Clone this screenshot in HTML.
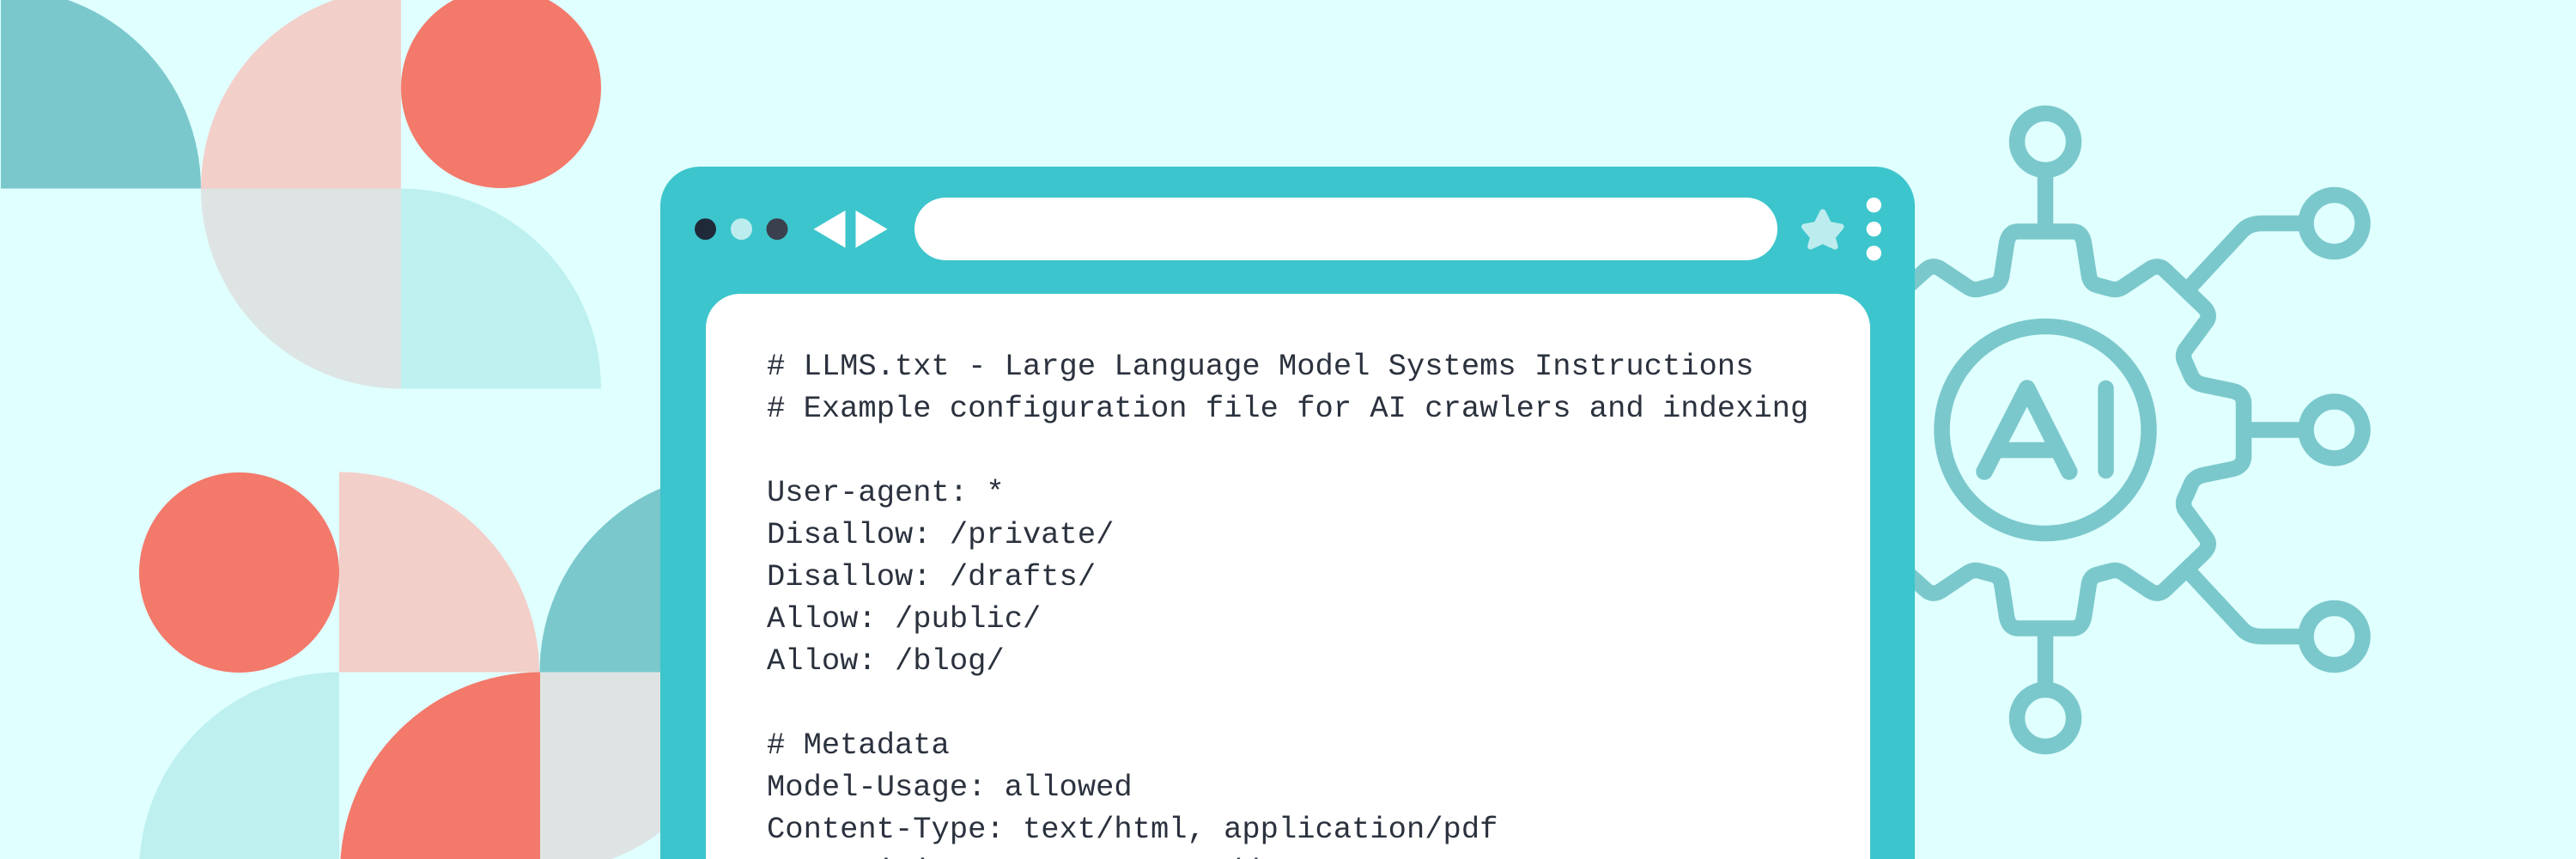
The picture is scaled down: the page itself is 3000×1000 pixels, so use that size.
<!DOCTYPE html>
<html lang="en">
<head>
<meta charset="utf-8">
<title>LLMS.txt</title>
<style>
html,body{margin:0;padding:0;background:#e0ffff;width:3000px;height:1000px;overflow:hidden;}
#page{position:relative;width:3000px;height:1000px;overflow:hidden;}
svg{position:absolute;left:0;top:0;}
pre{position:absolute;left:893px;top:401.5px;margin:0;font-family:"Liberation Mono",monospace;font-size:35.48px;line-height:49px;color:#2b323e;white-space:pre;}
</style>
</head>
<body>
<div id="page">
<svg width="3000" height="1000" viewBox="0 0 3000 1000" xmlns="http://www.w3.org/2000/svg">
  <rect width="3000" height="1000" fill="#e0ffff"/>
  <!-- top-left geometric group -->
  <path d="M1 219.500V-13.500A233 233 0 0 1 234 219.500Z" fill="#7ac8cc"/>
  <path d="M234 219.500A233 233 0 0 1 467 -13.500V219.500Z" fill="#f3cfca"/>
  <circle cx="583.500" cy="102.500" r="116.500" fill="#f3796b"/>
  <path d="M234 219.500H467V452.500A233 233 0 0 1 234 219.500Z" fill="#dee4e4"/>
  <path d="M467 219.500A233 233 0 0 1 700 452.500H467Z" fill="#bef0f0"/>
  <!-- bottom-left geometric group -->
  <circle cx="278.500" cy="666.500" r="116.500" fill="#f3796b"/>
  <path d="M395 549.500A233 233 0 0 1 628 782.500H395Z" fill="#f3cfca"/>
  <path d="M628.500 782.500A233 233 0 0 1 861.500 549.500V782.500Z" fill="#7ac8cc"/>
  <path d="M162 1015.500A233 233 0 0 1 395 782.500V1015.500Z" fill="#bef0f0"/>
  <path d="M396 1015.500A233 233 0 0 1 629 782.500V1015.500Z" fill="#f3796b"/>
  <path d="M629 782.500H862A233 233 0 0 1 629 1015.500Z" fill="#dee4e4"/>

  <!-- AI gear icon -->
  <g fill="none" stroke="#7bc8cc" stroke-width="18.500" stroke-linejoin="round" stroke-linecap="butt">
    <circle cx="2382" cy="165" r="33"/>
    <circle cx="2382" cy="836" r="33"/>
    <circle cx="2718.500" cy="260" r="33"/>
    <circle cx="2718.500" cy="500.500" r="33"/>
    <circle cx="2718.500" cy="741" r="33"/>
    <path d="M2382 200V262M2382 739V801"/>
    <path d="M2613 500.500H2690"/>
    <path d="M2545 340L2612 268Q2620 260 2634 260H2690"/>
    <path d="M2545 661L2612 733Q2620 741 2634 741H2690"/>
    <path d="M2222 333L2242 315Q2250 307 2260 313L2290 333Q2298 339 2307 336L2322 332Q2329 330 2331 322L2337 283Q2339.500 269.500 2350 269.500H2414Q2424.500 269.500 2427 283L2433 322Q2435 330 2442 332L2457 336Q2466 339 2474 333L2504 313Q2514 307 2522 315L2565 356Q2576 366 2569 375L2546 406Q2540 414 2546 424L2552 438Q2556 446 2566 448L2600 455Q2613 458 2613 470V531Q2613 543 2600 546L2566 553Q2556 555 2552 563L2546 577Q2540 587 2546 595L2569 626Q2576 635 2565 645L2522 686Q2514 694 2504 688L2474 668Q2466 662 2457 665L2442 669Q2435 671 2433 679L2427 718Q2424.500 731.500 2414 731.500H2350Q2339.500 731.500 2337 718L2331 679Q2329 671 2322 669L2307 665Q2298 662 2290 668L2260 688Q2250 694 2242 686L2222 668"/>
    <circle cx="2382" cy="500.500" r="120.500"/>
    <path d="M2311 549L2360.700 452L2409.700 549" stroke-linecap="round" stroke-width="19.500"/>
    <path d="M2330 524H2392"/>
    <path d="M2452.500 452V548" stroke-linecap="round"/>
  </g>

  <!-- browser window -->
  <path d="M769 1000V240A46 46 0 0 1 815 194H2184A46 46 0 0 1 2230 240V1000Z" fill="#3cc5cc"/>
  <path d="M822 1000V382A40 40 0 0 1 862 342H2138A40 40 0 0 1 2178 382V1000Z" fill="#ffffff"/>
  <rect x="1065" y="230" width="1005" height="73" rx="36.500" fill="#ffffff"/>
  <circle cx="821.500" cy="266.700" r="12.500" fill="#1f2a38"/>
  <circle cx="863.500" cy="266.700" r="12.500" fill="#bdecef"/>
  <circle cx="905" cy="266.700" r="12.500" fill="#3a404d"/>
  <path d="M947.500 266.700L984.500 245V288.500Z" fill="#ffffff"/>
  <path d="M1033.500 266.700L996.500 245V288.500Z" fill="#ffffff"/>
  <path d="M2122.700 247L2130 261.500L2144 264L2134 276L2137 287L2122.700 280.500L2108.500 287L2111.500 276L2101.500 264L2115.500 261.500Z" fill="#bdecef" stroke="#bdecef" stroke-width="7" stroke-linejoin="round"/>
  <circle cx="2182.300" cy="238.700" r="8.700" fill="#ffffff"/>
  <circle cx="2182.300" cy="266.700" r="8.700" fill="#ffffff"/>
  <circle cx="2182.300" cy="294.700" r="8.700" fill="#ffffff"/>
</svg>
<pre># LLMS.txt - Large Language Model Systems Instructions
# Example configuration file for AI crawlers and indexing

User-agent: *
Disallow: /private/
Disallow: /drafts/
Allow: /public/
Allow: /blog/

# Metadata
Model-Usage: allowed
Content-Type: text/html, application/pdf
Rate-Limit: 1000 requests/day</pre>
</div>
</body>
</html>
